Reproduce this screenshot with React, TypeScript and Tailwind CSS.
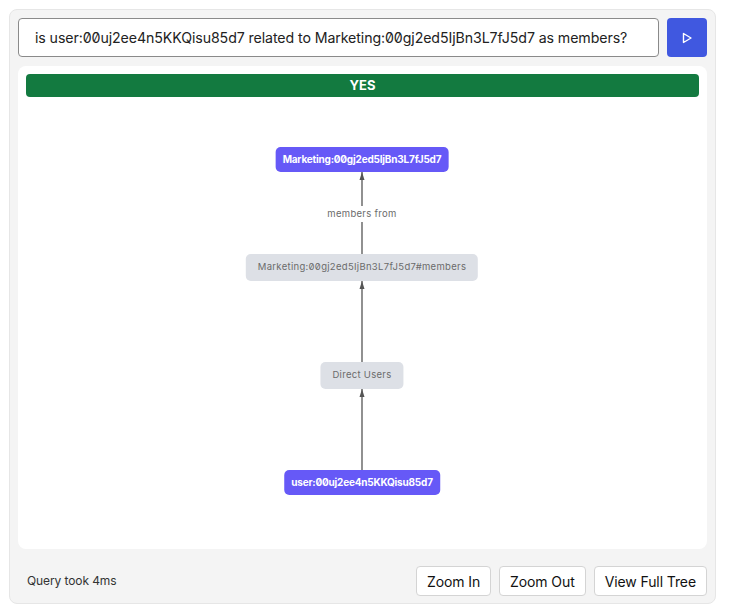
import React from "react";

const font = { fontFamily: "Inter, 'Noto Sans', sans-serif" };

const Node = ({
  label,
  top,
  kind,
}: {
  label: string;
  top: number;
  kind: "object" | "relation";
}) => (
  <div
    className={
      kind === "object"
        ? "absolute left-[336px] -translate-x-1/2 h-[25px] px-[7px] flex items-center rounded-[5px] bg-[#6659f7] text-white text-[10px] font-bold whitespace-nowrap slashed-zero tracking-[-0.2px]"
        : "absolute left-[336px] -translate-x-1/2 h-[27px] px-[12px] flex items-center rounded-[5px] bg-[#dde0e6] text-[#6b6b6b] text-[9.5px] whitespace-nowrap slashed-zero tracking-[0.3px]"
    }
    style={{ top }}
  >
    {label}
  </div>
);

const Graph = () => (
  <div className="relative flex-1">
    {/* edges */}
    <svg className="absolute inset-0 w-full h-full" width="673" height="444">
      <defs>
        <marker id="arrow" viewBox="0 0 8 6" refX="8" refY="3" markerWidth="8" markerHeight="6" markerUnits="userSpaceOnUse" orient="auto">
          <path d="M0 0.5 L8 3 L0 5.5 Z" fill="#555" />
        </marker>
      </defs>
      <line x1="336" y1="373" x2="336" y2="292" stroke="#555" strokeWidth="1.3" markerEnd="url(#arrow)" />
      <line x1="336" y1="265" x2="336" y2="184" stroke="#555" strokeWidth="1.3" markerEnd="url(#arrow)" />
      <line x1="336" y1="157" x2="336" y2="75" stroke="#555" strokeWidth="1.3" markerEnd="url(#arrow)" />
    </svg>
    <div className="absolute left-[336px] -translate-x-1/2 top-[109px] px-1 py-[1px] bg-white text-[9.5px] text-[#6b6b6b] tracking-[0.3px] whitespace-nowrap">
      members from
    </div>
    <Node kind="object" label="Marketing:00gj2ed5IjBn3L7fJ5d7" top={50} />
    <Node kind="relation" label="Marketing:00gj2ed5IjBn3L7fJ5d7#members" top={157} />
    <Node kind="relation" label="Direct Users" top={265} />
    <Node kind="object" label="user:00uj2ee4n5KKQisu85d7" top={373} />
  </div>
);

const ToolButton = ({ children }: { children: React.ReactNode }) => (
  <button className="h-[30px] px-[10px] rounded border border-[#d4d4d4] bg-white text-[14px] text-[#111] tracking-[-0.1px]">
    {children}
  </button>
);

export default function App() {
  return (
    <div className="p-[9px] w-[731px] h-[612px] bg-white" style={font}>
      <div className="w-[707px] h-[595px] flex flex-col rounded-lg border border-[#e6e6e6] bg-[#f4f4f4] px-2 pt-2 pb-[7px]">
        {/* query bar */}
        <div className="flex gap-2">
          <div className="flex-1 h-[39px] flex items-center px-4 rounded border border-[#8a8a8a] bg-white text-[14.2px] text-[#222] slashed-zero tracking-[-0.1px] whitespace-nowrap">
            is user:00uj2ee4n5KKQisu85d7 related to Marketing:00gj2ed5IjBn3L7fJ5d7 as members?
          </div>
          <button className="w-10 h-[39px] flex items-center justify-center rounded bg-[#4058e0]">
            <svg width="12" height="12" viewBox="0 0 12 12" fill="none">
              <path d="M2.5 1.5 L10 6 L2.5 10.5 Z" stroke="white" strokeWidth="1.4" strokeLinejoin="round" />
            </svg>
          </button>
        </div>

        {/* result panel */}
        <div className="mt-[9px] h-[483px] flex flex-col rounded-lg bg-white p-2">
          <div className="h-[23px] flex items-center justify-center rounded bg-[#137a40] text-white text-[13px] font-bold">
            YES
          </div>
          <Graph />
        </div>

        {/* footer */}
        <div className="h-[30px] mt-[17px] flex items-center justify-between pl-[9px]">
          <span className="text-[12px] text-[#333] tracking-[-0.1px]">Query took 4ms</span>
          <div className="flex gap-2">
            <ToolButton>Zoom In</ToolButton>
            <ToolButton>Zoom Out</ToolButton>
            <ToolButton>View Full Tree</ToolButton>
          </div>
        </div>
      </div>
    </div>
  );
}
